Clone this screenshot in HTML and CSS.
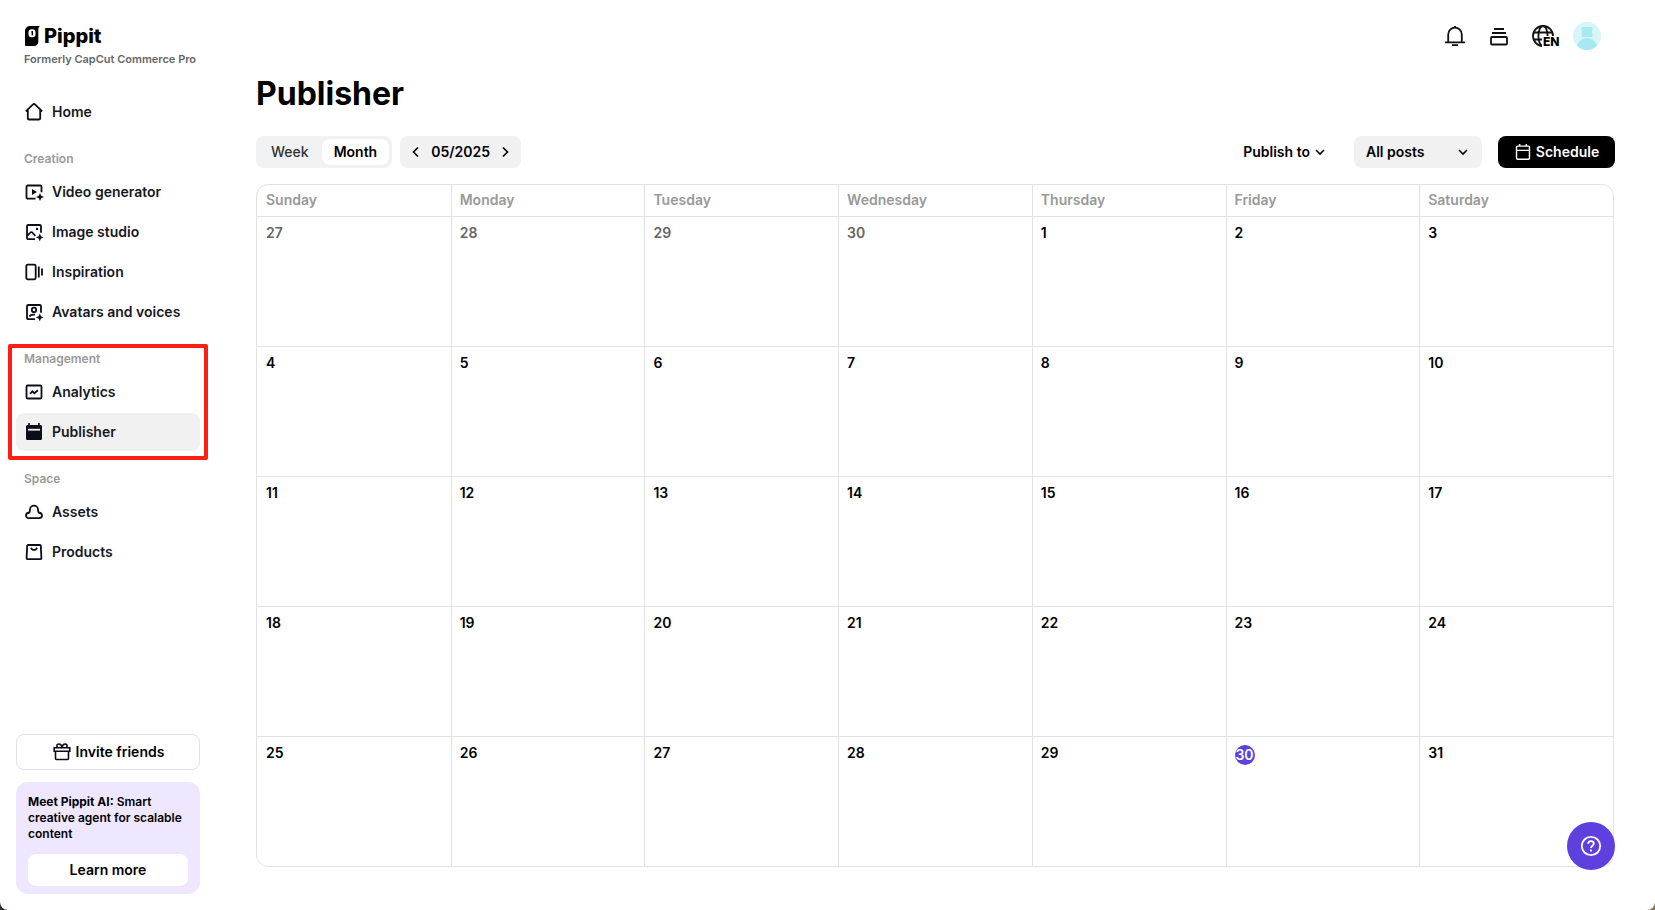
FILE: index.html
```
<!DOCTYPE html>
<html lang="en">
<head>
    <meta charset="UTF-8">
    <meta name="viewport" content="width=device-width, initial-scale=1.0">
    <title>Pippit - Publisher</title>
    <link rel="stylesheet" href="styles.css">
</head>
<body>
    <div class="app">
        <aside class="sidebar">
            <div class="brand">
                <a href="#" class="logo">
                    <svg width="16" height="20" viewBox="0 0 16 20"><path d="M1 5.500C1 2 3 0 6.500 0H16c-1.200.8-1.700 2-1.700 4v11.500c0 2.800-1.600 4.500-4.500 4.500H2.500C1.500 20 1 19.500 1 18.500z"/><rect x="4.500" y="3.200" width="7" height="8" rx="3.200" fill="#fff"/><path d="M7 5.500l2-.7v4.400H7.600V6.600z"/></svg>
                    <span>Pippit</span>
                </a>
                <p class="tagline">Formerly CapCut Commerce Pro</p>
            </div>

            <nav class="nav">
                <a href="#" class="nav-item">
                    <svg viewBox="0 0 20 20"><path d="M1.800 9.300 9 2.400a1.400 1.400 0 0 1 2 0l7.200 6.900M3.800 8v8.200c0 .8.500 1.300 1.300 1.300h9.800c.8 0 1.300-.5 1.300-1.300V8"/></svg>
                    Home
                </a>

                <h2 class="nav-title">Creation</h2>
                <a href="#" class="nav-item">
                    <svg viewBox="0 0 20 20"><path d="M11.500 16.700H3.800A1.300 1.300 0 0 1 2.500 15.400V4.800a1.300 1.300 0 0 1 1.300-1.300h12.400a1.300 1.300 0 0 1 1.300 1.300v5.400"/><path class="solid" d="M8 7v6l5-3zM16 11l1.200 2.800L20 15l-2.800 1.200L16 19l-1.200-2.800L12 15l2.800-1.200z"/></svg>
                    Video generator
                </a>
                <a href="#" class="nav-item">
                    <svg viewBox="0 0 20 20"><path d="M11 17.200H4.300A1.300 1.300 0 0 1 3 15.900V4.300A1.300 1.300 0 0 1 4.300 3h11.400A1.300 1.300 0 0 1 17 4.300v6.400M3.500 13.700l2.800-3.200a1.300 1.300 0 0 1 2 0l3 3.300"/><circle class="solid" cx="13" cy="6.900" r="1.200"/><path class="solid" d="M15.800 11.500l1.200 2.700 2.700 1.200-2.700 1.200-1.200 2.700-1.200-2.700-2.700-1.200 2.700-1.200z"/></svg>
                    Image studio
                </a>
                <a href="#" class="nav-item">
                    <svg viewBox="0 0 20 20"><rect x="2.300" y="2.700" width="9.400" height="14.600" rx="1.500"/><path d="M14.800 4.600v10.800M18 6.600v6.800"/></svg>
                    Inspiration
                </a>
                <a href="#" class="nav-item">
                    <svg viewBox="0 0 20 20"><path d="M11 17.200H4.300A1.300 1.300 0 0 1 3 15.900V4.300A1.300 1.300 0 0 1 4.300 3h11.400A1.300 1.300 0 0 1 17 4.300v6.400M5.500 14.500c.8-1.500 2.500-2 5.500-1.800"/><circle cx="10" cy="7.900" r="2.200"/><path class="solid" d="M15.800 11.500l1.200 2.700 2.700 1.200-2.700 1.200-1.200 2.700-1.200-2.700-2.700-1.200 2.700-1.200z"/></svg>
                    Avatars and voices
                </a>

                <div class="nav-group">
                    <h2 class="nav-title">Management</h2>
                    <a href="#" class="nav-item">
                        <svg viewBox="0 0 20 20"><rect x="2.500" y="3.500" width="15" height="13" rx="1.300"/><path d="M6 11.800l2.400-2.500 1.900 1.900 3.600-3"/></svg>
                        Analytics
                    </a>
                    <a href="#" class="nav-item active">
                        <svg viewBox="0 0 20 20"><path class="solid" d="M5.800 1v2h8.400V1h1.600v2h.5c1 0 1.700.7 1.700 1.700v11.800c0 1-.7 1.500-1.700 1.500H3.700c-1 0-1.700-.5-1.700-1.500V4.700C2 3.700 2.700 3 3.700 3h.5V1z"/><path d="M4 7.700h12" class="cut"/></svg>
                        Publisher
                    </a>
                    <div class="highlight"></div>
                </div>

                <h2 class="nav-title">Space</h2>
                <a href="#" class="nav-item">
                    <svg viewBox="0 0 20 20"><path d="M5 16.200c-1.800 0-3-1.100-3-2.700 0-1.700 1.200-2.600 3.300-3C5.800 9.500 6 8.600 6 7.700a4 4 0 0 1 8 0c0 .9.200 1.800.7 2.800 2.100.4 3.300 1.300 3.300 3 0 1.600-1.200 2.700-3 2.700z"/></svg>
                    Assets
                </a>
                <a href="#" class="nav-item">
                    <svg viewBox="0 0 20 20"><path d="M4.200 3h11.600c.6 0 1 .4 1 .9l.6 12c0 .8-.5 1.300-1.300 1.300H3.900c-.8 0-1.300-.5-1.300-1.300l.6-12c0-.5.400-.9 1-.9zM7 5.700c.5 1.500 1.600 2.200 3 2.200s2.500-.7 3-2.200"/></svg>
                    Products
                </a>
            </nav>

            <div class="sidebar-footer">
                <button type="button" class="invite">
                    <svg viewBox="0 0 20 20"><path d="M3.500 9.300v7.200c0 .6.400 1 1 1h11c.6 0 1-.4 1-1V9.300M2.200 5.800h15.600v3.500H2.200zM10 5.500C9.500 3 8.300 2 6.900 2c-1.200 0-2 .8-2 1.800 0 .8.400 1.400 1 1.800M10 5.500C10.500 3 11.700 2 13.100 2c1.200 0 2 .8 2 1.800 0 .8-.4 1.400-1 1.800"/></svg>
                    Invite friends
                </button>
                <div class="promo">
                    <p><strong>Meet Pippit AI:</strong> Smart creative agent for scalable content</p>
                    <button type="button">Learn more</button>
                </div>
            </div>
        </aside>

        <main class="main">
            <header class="topbar">
                <button type="button" class="icon-btn" aria-label="Notifications">
                    <svg width="24" height="24" viewBox="0 0 24 24"><path d="M5.200 18v-7.500a6.800 6.800 0 0 1 13.600 0V18M2 18.300h20M9 21.200h6M11 3h2"/></svg>
                </button>
                <button type="button" class="icon-btn" aria-label="Tasks">
                    <svg width="24" height="24" viewBox="0 0 24 24"><path d="M7 5h10M5 9h14"/><rect x="4" y="13" width="16" height="7.500" rx="1"/></svg>
                </button>
                <button type="button" class="icon-btn" aria-label="Language">
                    <svg width="24" height="24" viewBox="0 0 24 24"><circle cx="12" cy="12" r="10"/><ellipse cx="12" cy="12" rx="4.600" ry="10"/><path d="M3 8.500h18M3 15.500h18"/></svg>
                    <span>EN</span>
                </button>
                <button type="button" class="avatar" aria-label="Account">
                    <svg width="28" height="28" viewBox="0 0 28 28"><circle cx="14" cy="14" r="14" fill="#d9f4f6"/><path d="M10 5h8a1.500 1.500 0 0 1 1.500 1.500V8l-.5.700v2.600l.5.700v1.500A1.500 1.500 0 0 1 18 15h-8a1.500 1.500 0 0 1-1.500-1.500V12l.5-.7V8.700L8.500 8V6.500A1.500 1.500 0 0 1 10 5zM4 23.800C5.500 19 9.300 16 14 16s8.500 3 10 7.800A14 14 0 0 1 14 28a14 14 0 0 1-10-4.200z" fill="#a5e9f1"/></svg>
                </button>
            </header>

            <h1>Publisher</h1>

            <div class="toolbar">
                <div class="view-switch">
                    <button type="button">Week</button>
                    <button type="button" class="selected">Month</button>
                </div>
                <div class="month-picker">
                    <button type="button" aria-label="Previous month"><svg width="12" height="12" viewBox="0 0 12 12"><path d="M8 1.500 3.500 6 8 10.500"/></svg></button>
                    <span>05/2025</span>
                    <button type="button" aria-label="Next month"><svg width="12" height="12" viewBox="0 0 12 12"><path d="M4 1.500 8.500 6 4 10.500"/></svg></button>
                </div>
                <div class="actions">
                    <button type="button" class="publish-to">
                        Publish to
                        <svg width="12" height="12" viewBox="0 0 12 12"><path d="M2 4l4 4 4-4"/></svg>
                    </button>
                    <div class="select">
                        <select aria-label="Filter posts">
                            <option>All posts</option>
                            <option>Scheduled</option>
                            <option>Published</option>
                        </select>
                        <svg width="12" height="12" viewBox="0 0 12 12"><path d="M2 4l4 4 4-4"/></svg>
                    </div>
                    <button type="button" class="schedule">
                        <svg width="18" height="18" viewBox="0 0 20 20"><path d="M4 3.500h12c.8 0 1.200.5 1.200 1.300v11.900c0 .8-.5 1.300-1.200 1.300H4c-.8 0-1.200-.5-1.200-1.300V4.800C2.800 4 3.200 3.500 4 3.500zM2.800 8.200h14.400M6.300 1v2.700M13.700 1v2.700"/></svg>
                        Schedule
                    </button>
                </div>
            </div>

            <table class="calendar">
                <thead>
                    <tr>
                        <th>Sunday</th>
                        <th>Monday</th>
                        <th>Tuesday</th>
                        <th>Wednesday</th>
                        <th>Thursday</th>
                        <th>Friday</th>
                        <th>Saturday</th>
                    </tr>
                </thead>
                <tbody>
                    <tr>
                        <td class="other">27</td>
                        <td class="other">28</td>
                        <td class="other">29</td>
                        <td class="other">30</td>
                        <td>1</td>
                        <td>2</td>
                        <td>3</td>
                    </tr>
                    <tr>
                        <td>4</td>
                        <td>5</td>
                        <td>6</td>
                        <td>7</td>
                        <td>8</td>
                        <td>9</td>
                        <td>10</td>
                    </tr>
                    <tr>
                        <td>11</td>
                        <td>12</td>
                        <td>13</td>
                        <td>14</td>
                        <td>15</td>
                        <td>16</td>
                        <td>17</td>
                    </tr>
                    <tr>
                        <td>18</td>
                        <td>19</td>
                        <td>20</td>
                        <td>21</td>
                        <td>22</td>
                        <td>23</td>
                        <td>24</td>
                    </tr>
                    <tr>
                        <td>25</td>
                        <td>26</td>
                        <td>27</td>
                        <td>28</td>
                        <td>29</td>
                        <td><span class="today">30</span></td>
                        <td>31</td>
                    </tr>
                </tbody>
            </table>
        </main>

        <button type="button" class="help" aria-label="Help">
            <svg width="24" height="24" viewBox="0 0 24 24"><circle cx="12" cy="12" r="9.200"/><path d="M9.200 9.800c0-1.700 1.200-2.700 2.800-2.700s2.800 1 2.800 2.500c0 2.200-2.800 2.200-2.800 4.400M12 15.600v1.900"/></svg>
        </button>
    </div>
</body>
</html>
```
FILE: styles.css
```
* {
    box-sizing: border-box;
}

html {
    background: linear-gradient(to right, #26302e 50%, #8a7355 50%);
}

body {
    margin: 0;
    font-family: Inter, Arial, sans-serif;
    font-size: 14px;
    font-weight: 600;
    line-height: 20px;
    color: #000;
}

h1, h2, p {
    margin: 0;
}

a {
    color: inherit;
    text-decoration: none;
}

button, select {
    padding: 0;
    border: none;
    background: none;
    font: inherit;
    color: inherit;
    cursor: pointer;
}

svg {
    display: block;
    flex-shrink: 0;
}

.app {
    position: relative;
    display: flex;
    min-height: 100vh;
    background-color: #fff;
    border-radius: 0 0 8px 8px;
}

/* Sidebar */
.sidebar {
    display: flex;
    flex-direction: column;
    width: 216px;
    flex-shrink: 0;
    padding: 24px 16px 16px;
}

.brand {
    height: 69px;
    padding-left: 8px;
}

.logo {
    display: flex;
    align-items: center;
    gap: 4px;
    height: 24px;
    font-size: 20px;
    font-weight: 800;
}

.tagline {
    font-size: 11px;
    line-height: 22px;
    color: #666;
    white-space: nowrap;
}

.nav {
    display: flex;
    flex-direction: column;
    gap: 2px;
    color: #161823;
}

.nav-title {
    padding: 14px 8px 0;
    font-size: 12px;
    font-weight: 600;
    line-height: 24px;
    color: #999;
}

.nav-item {
    display: flex;
    align-items: center;
    gap: 8px;
    height: 38px;
    padding: 0 8px;
    border-radius: 8px;
}

.nav-item svg, .invite svg {
    width: 20px;
    height: 20px;
    fill: none;
    stroke: #0b0d17;
    stroke-width: 1.8px;
}

.nav-item .solid {
    fill: #0b0d17;
    stroke: none;
}

.nav-item .cut {
    stroke: #f1f1f1;
}

.nav-item.active {
    background-color: #f1f1f1;
}

.nav-group {
    position: relative;
    display: flex;
    flex-direction: column;
    gap: 2px;
}

.highlight {
    position: absolute;
    top: 11px;
    right: -8px;
    bottom: -9px;
    left: -8px;
    border: 4px solid #ff1f12;
    border-radius: 2px;
    pointer-events: none;
}

.sidebar-footer {
    margin-top: auto;
}

.invite {
    display: flex;
    align-items: center;
    justify-content: center;
    gap: 4px;
    width: 100%;
    height: 36px;
    margin-bottom: 12px;
    border: 1px solid #e3e3e3;
    border-radius: 8px;
}

.invite svg {
    stroke-width: 1.6px;
}

.promo {
    padding: 12px 12px 8px;
    background-color: #efe7ff;
    border-radius: 12px;
}

.promo p {
    font-size: 12px;
    line-height: 16px;
    margin-bottom: 12px;
}

.promo strong {
    font-weight: 700;
}

.promo button {
    width: 100%;
    height: 32px;
    background-color: #fff;
    border-radius: 8px;
}

/* Main */
.main {
    flex: 1;
    min-width: 0;
    padding: 20px 40px 40px;
}

.topbar {
    display: flex;
    align-items: center;
    justify-content: flex-end;
    gap: 16px;
    height: 32px;
    padding-right: 14px;
}

.icon-btn {
    position: relative;
    width: 28px;
    padding: 0 2px;
}

.icon-btn svg {
    fill: none;
    stroke: #111;
    stroke-width: 1.8px;
}

.icon-btn span {
    position: absolute;
    top: 12px;
    left: 13px;
    padding-left: 1px;
    background-color: #fff;
    font-size: 12px;
    font-weight: 800;
    line-height: 12px;
}

h1 {
    margin: 22px 0;
    font-size: 32px;
    font-weight: 700;
    line-height: 40px;
}

.toolbar {
    display: flex;
    align-items: center;
    gap: 8px;
    margin-bottom: 16px;
}

.toolbar svg {
    fill: none;
    stroke: currentColor;
    stroke-width: 1.6px;
}

.view-switch {
    display: flex;
    gap: 1px;
    height: 32px;
    padding: 3px;
    background-color: #f1f2f4;
    border-radius: 8px;
}

.view-switch button {
    padding: 0 12px;
    border-radius: 8px;
    font-weight: 500;
    color: #333;
}

.view-switch .selected {
    background-color: #fff;
    font-weight: 600;
    color: #000;
}

.month-picker {
    display: flex;
    align-items: center;
    gap: 9px;
    height: 32px;
    padding: 0 10px;
    background-color: #f1f1f1;
    border-radius: 8px;
}

.actions {
    display: flex;
    align-items: center;
    margin-left: auto;
}

.publish-to {
    display: flex;
    align-items: center;
    gap: 4px;
    margin-right: 28px;
}

.select {
    position: relative;
    margin-right: 16px;
}

.select select {
    appearance: none;
    width: 128px;
    height: 32px;
    padding: 0 12px;
    background-color: #f1f1f1;
    border-radius: 8px;
}

.select svg {
    position: absolute;
    top: 10px;
    right: 13px;
    pointer-events: none;
}

.schedule {
    display: flex;
    align-items: center;
    justify-content: center;
    gap: 4px;
    width: 117px;
    height: 32px;
    background-color: #000;
    border-radius: 8px;
    color: #fff;
}

/* Calendar */
.calendar {
    width: calc(100% - 1px);
    table-layout: fixed;
    border-collapse: separate;
    border-spacing: 0;
    border: 1px solid #e3e3e3;
    border-radius: 12px;
}

.calendar th, .calendar td {
    padding: 0 8px;
    border-left: 1px solid #e3e3e3;
    text-align: left;
}

.calendar th:first-child, .calendar td:first-child {
    padding-left: 9px;
    border-left: none;
}

.calendar th {
    height: 31px;
    padding-bottom: 2px;
    font-weight: 600;
    color: #999;
}

.calendar td {
    height: 130px;
    padding-top: 6px;
    border-top: 1px solid #e3e3e3;
    vertical-align: top;
}

.calendar .other {
    color: #666;
}

.today {
    display: block;
    width: 20px;
    height: 20px;
    margin-top: 2px;
    background-color: #5d40de;
    border-radius: 50%;
    color: #fff;
    text-align: center;
}

.help {
    position: absolute;
    right: 40px;
    bottom: 40px;
    display: flex;
    align-items: center;
    justify-content: center;
    width: 48px;
    height: 48px;
    background-color: #5d40de;
    border-radius: 50%;
}

.help svg {
    fill: none;
    stroke: #fff;
    stroke-width: 1.8px;
}
```
